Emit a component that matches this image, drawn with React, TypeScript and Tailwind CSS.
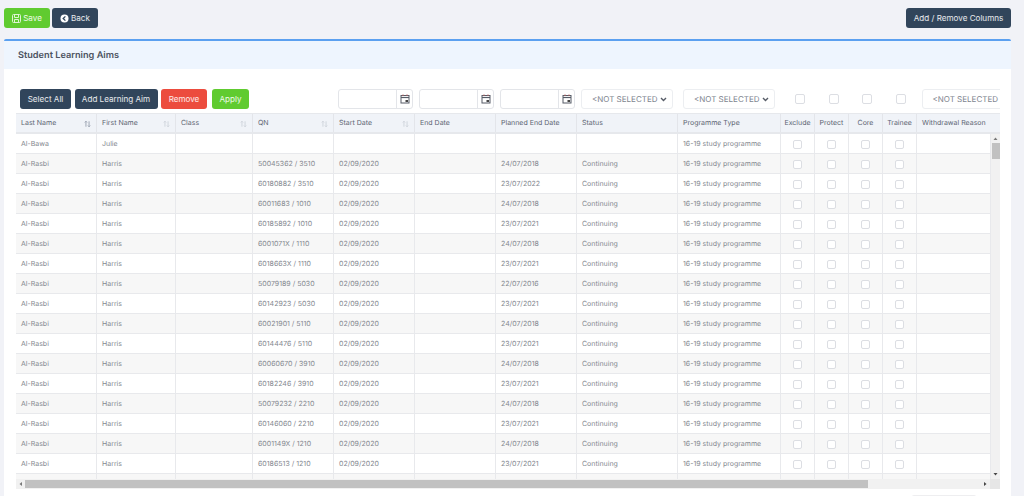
const rows: [string, string][] = [
	["50045362 / 3510", "24/07/2018"],
	["60180882 / 3510", "23/07/2022"],
	["60011683 / 1010", "24/07/2018"],
	["60185892 / 1010", "23/07/2021"],
	["6001071X / 1110", "24/07/2018"],
	["6018663X / 1110", "23/07/2021"],
	["50079189 / 5030", "22/07/2016"],
	["60142923 / 5030", "23/07/2021"],
	["60021901 / 5110", "24/07/2018"],
	["60144476 / 5110", "23/07/2021"],
	["60060670 / 3910", "24/07/2018"],
	["60182246 / 3910", "23/07/2021"],
	["50079232 / 2210", "24/07/2018"],
	["60146060 / 2210", "23/07/2021"],
	["6001149X / 1210", "24/07/2018"],
	["60186513 / 1210", "23/07/2021"],
];

const widths = [81, 79, 77, 81, 81, 81, 81, 101, 103, 34, 34, 34, 34, 74];

const cell = "border-r border-b border-[#e8e9ec] px-[5px] pt-[1px] overflow-hidden whitespace-nowrap";

function SortIcon({ active }: { active?: boolean }) {
	const color = active ? "#8a93a3" : "#c9ced6";
	return (
		<svg width="7" height="8" viewBox="0 0 9 9" fill="none" stroke={color} strokeWidth="1">
			<path d="M2.5 8V1M1 2.5L2.5 1L4 2.5" />
			<path d="M6.5 1v7M5 6.5L6.5 8L8 6.5" />
		</svg>
	);
}

function Check({ size = "w-[9px] h-[9px]" }: { size?: string }) {
	return <span className={`${size} block mx-auto rounded-[2px] border border-[#dcdee3] bg-white`} />;
}

function CalendarIcon() {
	return (
		<svg width="10" height="10" viewBox="0 0 10 10" fill="none">
			<rect x="1" y="1.5" width="8" height="7.5" stroke="#555b66" strokeWidth="1" />
			<path d="M1 3.5h8" stroke="#555b66" strokeWidth="1.2" />
			<path d="M3 0.5v1.5M7 0.5v1.5" stroke="#b55a5a" strokeWidth="1" />
			<rect x="5.5" y="6" width="2.5" height="2" fill="#444" />
		</svg>
	);
}

function DateInput() {
	return (
		<div className="w-[75px] h-[20px] shrink-0 flex rounded-[3px] border border-[#e3e5e9] bg-white">
			<div className="flex-1" />
			<div className="w-[16px] border-l border-[#e3e5e9] flex items-center justify-center">
				<CalendarIcon />
			</div>
		</div>
	);
}

function NotSelected({ arrow = true }: { arrow?: boolean }) {
	return (
		<div className="w-[92px] h-[20px] shrink-0 flex items-center justify-between pl-[10px] pr-[5px] rounded-[3px] border border-[#eceef1] bg-white text-[8px] text-[#7d838e]">
			<span className="whitespace-nowrap">&lt;NOT SELECTED</span>
			{arrow && (
				<svg width="7" height="5" viewBox="0 0 7 5" fill="none" stroke="#555b66" strokeWidth="1.4">
					<path d="M1 1l2.5 2.5L6 1" />
				</svg>
			)}
		</div>
	);
}

function Btn({ color, w, children }: { color: string; w: string; children: React.ReactNode }) {
	return (
		<button type="button" className={`${color} ${w} h-[20px] shrink-0 flex items-center justify-center gap-[2px] rounded-[3px] text-[8.1px] leading-none text-white/90`}>
			{children}
		</button>
	);
}

export default function App() {
	return (
		<div className="w-[1024px] h-[496px] overflow-hidden bg-[#f1f2f7] font-['Inter',sans-serif] opacity-[0.99] [text-rendering:geometricPrecision]">
			<div className="h-[39px] pl-[4px] pr-[13px] pt-[8px] flex justify-between items-start">
				<div className="flex gap-[2px]">
					<Btn color="bg-[#5fcb2e]" w="w-[46px]">
						<svg width="9" height="9" viewBox="0 0 9 9" fill="none" stroke="white" strokeWidth="1" opacity="0.8">
							<rect x="0.5" y="0.5" width="8" height="8" rx="1" />
							<path d="M2.5 0.5v3h4v-3M2.5 8.5v-3h4v3" />
						</svg>
						Save
					</Btn>
					<Btn color="bg-[#2f435a]" w="w-[46px]">
						<svg width="9" height="9" viewBox="0 0 9 9">
							<circle cx="4.5" cy="4.5" r="4" fill="white" />
							<path d="M5.4 2.4L3.2 4.5l2.2 2.1" stroke="#2f435a" strokeWidth="1.3" fill="none" />
						</svg>
						Back
					</Btn>
				</div>
				<Btn color="bg-[#2f435a]" w="w-[105px]">Add / Remove Columns</Btn>
			</div>

			<div className="ml-[4px] w-[1007px] h-[457px] bg-white border-t-2 border-[#5a9ff0] rounded-t-[2px] overflow-hidden">
				<div className="h-[28px] bg-[#eef5fe] pl-[14px] pt-[2px] flex items-center text-[9.2px] font-semibold text-[#4a5160]">
					Student Learning Aims
				</div>

				<div className="pl-[12px] pt-[20px]">
					<div className="w-[984px] h-[24px] pl-[4px] overflow-hidden flex items-start">
						<div className="flex items-start w-[318px] shrink-0">
							<div className="flex gap-[3.5px]">
								<Btn color="bg-[#2f435a]" w="w-[51px]">Select All</Btn>
								<Btn color="bg-[#2f435a]" w="w-[83px]">Add Learning Aim</Btn>
								<Btn color="bg-[#ec4a3c]" w="w-[46px]">Remove</Btn>
								<Btn color="bg-[#5fcb2e] ml-[1.5px]" w="w-[37px]">Apply</Btn>
							</div>
						</div>
						<div className="flex gap-[6px]">
							<DateInput />
							<DateInput />
							<DateInput />
							<NotSelected />
						</div>
						<div className="ml-[10px]"><NotSelected /></div>
						<div className="ml-[20px] mt-[5px] flex gap-[23.5px] shrink-0">
							<Check size="w-[10px] h-[10px]" />
							<Check size="w-[10px] h-[10px]" />
							<Check size="w-[10px] h-[10px]" />
							<Check size="w-[10px] h-[10px]" />
						</div>
						<div className="ml-[16px] shrink-0"><NotSelected arrow={false} /></div>
					</div>

					<div className="w-[984px] h-[376px] overflow-hidden">
						<div className="h-[21px] flex bg-[#f0f3f8] border-t border-b-2 border-[#e6e8ec] text-[7px] text-[#5c6472]">
							{["Last Name", "First Name", "Class", "QN", "Start Date", "End Date", "Planned End Date", "Status", "Programme Type", "Exclude", "Protect", "Core", "Trainee", "Withdrawal Reason"].map((h, i) => (
								<div
									key={h}
									style={{ width: i === 13 ? 83 : widths[i] }}
									className={`shrink-0 flex items-center justify-between px-[5px] pt-[1px] overflow-hidden whitespace-nowrap ${i < 13 ? "border-r border-[#e3e5ea]" : ""} ${i >= 9 && i <= 12 ? "justify-center px-0" : ""}`}
								>
									{h}
									{i < 5 && <SortIcon active={i === 0} />}
								</div>
							))}
						</div>
						<div className="flex h-[345px]">
							<div className="w-[975px] h-[345px] overflow-hidden text-[7px] text-[#84888f]">
								{[null, ...rows, null].map((r, idx) => (
									<div key={idx} className={`h-[20px] flex items-center ${idx % 2 === 1 ? "bg-[#f7f7f7]" : "bg-white"}`}>
										{widths.map((w, c) => {
											let text = "";
											if (idx === 0) text = ["Al-Bawa", "Julie"][c] ?? "";
											else if (r) text = ["Al-Rasbi", "Harris", "", r[0], "02/09/2020", "", r[1], "Continuing"][c] ?? "";
											if (c === 8 && idx < 17) text = "16-19 study programme";
											return (
												<div key={c} style={{ width: w }} className={`${cell} shrink-0 h-[20px] flex items-center`}>
													{c >= 9 && c <= 12 ? <Check /> : text}
												</div>
											);
										})}
									</div>
								))}
							</div>
							<div className="w-[9px] h-[345px] bg-[#f1f1f1] flex flex-col items-center">
								<svg width="5" height="9" viewBox="0 0 5 9" className="shrink-0"><path d="M0.5 6L2.5 3.5L4.5 6z" fill="#777" /></svg>
								<div className="w-[8px] h-[16px] bg-[#c1c1c1]" />
								<div className="flex-1" />
								<svg width="5" height="9" viewBox="0 0 5 9" className="shrink-0"><path d="M0.5 3L2.5 5.5L4.5 3z" fill="#444" /></svg>
							</div>
						</div>
						<div className="h-[10px] flex bg-[#f1f1f1] items-center">
							<svg width="9" height="8" viewBox="0 0 9 8" className="shrink-0"><path d="M6 2L3.5 4L6 6z" fill="#777" /></svg>
							<div className="w-[843px] h-[8px] bg-[#c1c1c1]" />
							<div className="flex-1" />
							<svg width="9" height="8" viewBox="0 0 9 8" className="shrink-0"><path d="M3 2L5.5 4L3 6z" fill="#444" /></svg>
							<div className="w-[10px] h-[10px] bg-[#e6e6e6]" />
						</div>
					</div>

					<div className="mt-[6px] ml-[895px] w-[66px] h-[20px] rounded-[3px] bg-white border border-[#eeeef0]" />
				</div>
			</div>
		</div>
	);
}
